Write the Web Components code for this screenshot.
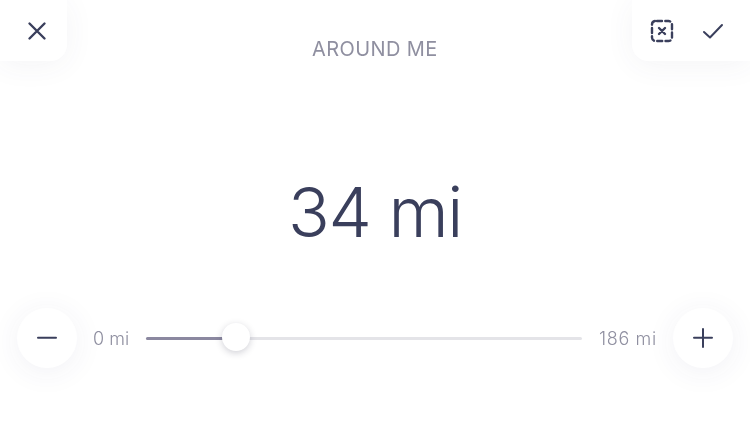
<!DOCTYPE html>
<html><head><meta charset="utf-8">
<style>
html,body{margin:0;padding:0;background:#fff;width:750px;height:422px;overflow:hidden}
body{font-family:"Inter","Open Sans",sans-serif;color:#3a3f5c}
</style></head><body>
<range-screen></range-screen>
<template id="ic-card"><style>
:host{display:flex;align-items:center;height:61px;background:#fff;box-sizing:border-box;box-shadow:0 4px 30px rgba(60,60,110,.06)}
:host([side=left]){width:67px;padding-left:25px;border-bottom-right-radius:16px}
:host([side=right]){width:118px;padding-left:17px;gap:26px;border-bottom-left-radius:16px;justify-self:end}
</style><slot></slot></template>
<template id="ic-round"><style>
:host{display:flex;align-items:center;justify-content:center;width:60px;height:60px;flex:none;border-radius:50%;background:#fff;box-shadow:0 4px 30px rgba(60,60,110,.07)}
</style><slot></slot></template>
<template id="ic-slider"><style>
:host{display:block;flex:1;height:24px;position:relative}
.track{position:absolute;left:0;right:0;top:11px;height:3px;border-radius:2px;background:#e4e4e8}
.fill{position:absolute;left:0;top:11px;height:3px;width:90px;border-radius:2px;background:#8b88a0}
.thumb{position:absolute;left:76px;top:-3px;width:28px;height:28px;border-radius:50%;background:#fff;box-shadow:0 2px 7px rgba(40,40,70,.22)}
</style><div class="track"></div><div class="fill"></div><div class="thumb"></div></template>
<template id="ic-screen"><style>
:host{display:flex;flex-direction:column;width:750px;height:422px;position:relative}
header{display:grid;grid-template-columns:1fr auto 1fr;align-items:start;height:61px}
h1{margin:39px 0 0;font:400 20px/21px "Inter",sans-serif;color:#8f8fa0;letter-spacing:.4px;will-change:transform}
.value{margin-top:104px;height:94px;text-align:center;font:300 69px/94px "Inter",sans-serif;color:#3a3f5c;letter-spacing:-1.4px;will-change:transform}
.row{display:flex;align-items:center;margin-top:49px;padding:0 17px;height:60px}
.lab{font:300 18px/24px "Inter",sans-serif;color:#8f8fa0;flex:none;will-change:transform;position:relative;top:.5px}
.l{margin:0 17px 0 16px}.r{margin:0 16px 0 17px;letter-spacing:.65px}
svg{display:block;fill:none;stroke:#3a3f5c;stroke-linecap:round;stroke-linejoin:round}
</style>
<header>
<ic-card side="left"><svg width="24" height="24" viewBox="0 0 24 24" stroke-width="2.400"><path d="M4.500 4.500 19.500 19.500M19.500 4.500 4.500 19.500"/></svg></ic-card>
<h1>AROUND ME</h1>
<ic-card side="right"><svg width="26" height="26" viewBox="0 0 26 26" stroke-width="2.400"><rect x="3" y="3" width="20" height="20" rx="3.500" stroke-dasharray="5 3.300" stroke-dashoffset="-1.500"/><path d="M10 10l6 6M16 10l-6 6" stroke-width="2.400"/></svg><svg width="24" height="24" viewBox="0 0 24 24" stroke-width="2"><path d="M3 13 9 18.500 21 6"/></svg></ic-card>
</header>
<div class="value">34 mi</div>
<div class="row">
<ic-round><svg width="24" height="24" viewBox="0 0 24 24" stroke-width="2"><path d="M3 11.800H21"/></svg></ic-round>
<span class="lab l">0 mi</span>
<ic-slider></ic-slider>
<span class="lab r">186 mi</span>
<ic-round><svg width="24" height="24" viewBox="0 0 24 24" stroke-width="2"><path d="M3 11.800H21M12 3V21"/></svg></ic-round>
</div></template>
<script>
function def(n,t){customElements.define(n,class extends HTMLElement{constructor(){super();this.attachShadow({mode:'open'}).appendChild(document.getElementById(t).content.cloneNode(true))}})}
def('ic-card','ic-card');def('ic-round','ic-round');def('ic-slider','ic-slider');def('range-screen','ic-screen');
</script>
</body></html>
